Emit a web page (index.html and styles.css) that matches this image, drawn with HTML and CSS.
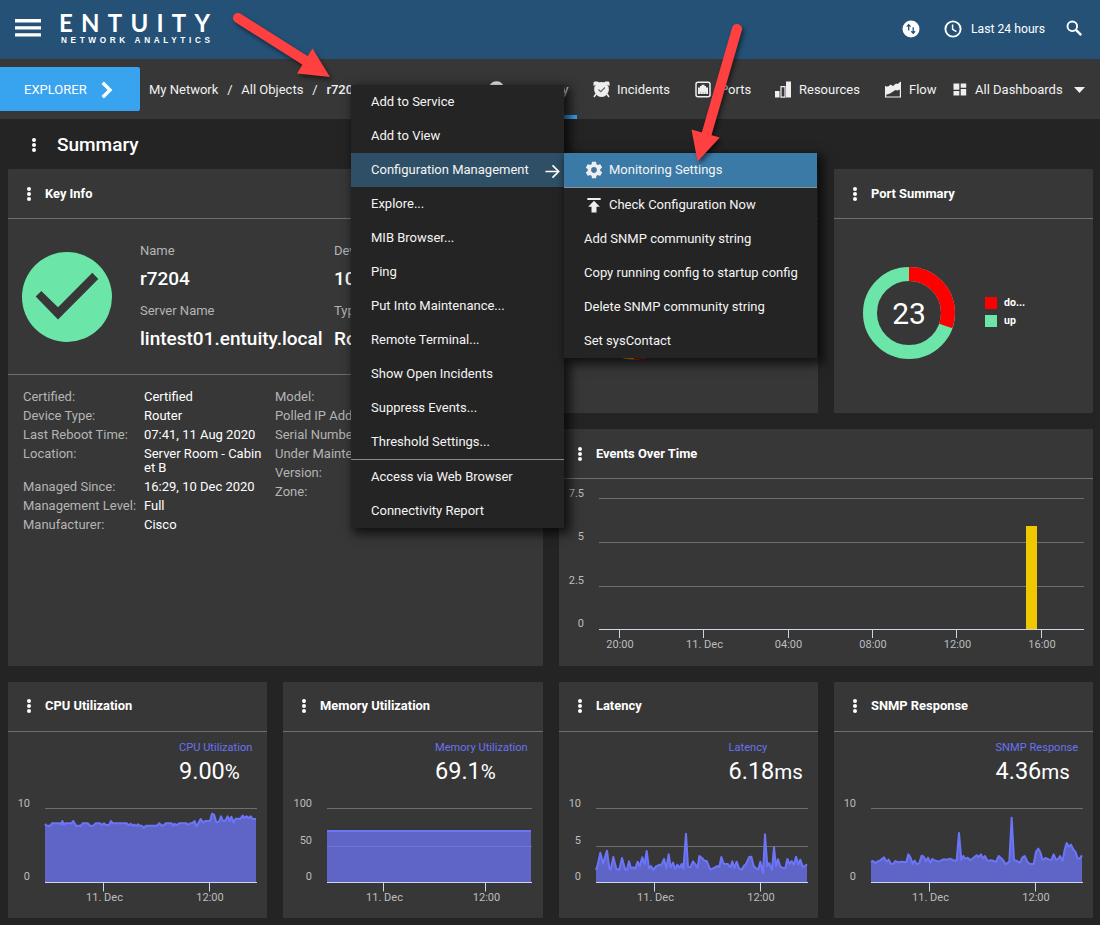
FILE: index.html
```html
<!DOCTYPE html>
<html lang="en">
<head>
<meta charset="utf-8">
<title>Entuity Network Analytics</title>
<link rel="stylesheet" href="styles.css">
</head>
<body>
<svg class="defs" width="0" height="0">
  <symbol id="dots" viewBox="0 0 6 16"><circle cx="3" cy="3" r="2"/><circle cx="3" cy="8" r="2"/><circle cx="3" cy="13" r="2"/></symbol>
</svg>

<header class="topbar">
  <svg class="burger" width="26" height="18" viewBox="0 0 26 18"><path d="M0 0h26v3.4H0zM0 7.2h26v3.4H0zM0 14.2h26v3.4H0z"/></svg>
  <svg class="logo" width="160" height="40" viewBox="0 0 160 40">
    <text class="logo-name" x="-1" y="22" textLength="151">ENTUITY</text>
    <text class="logo-sub" x="1" y="33" textLength="149">NETWORK ANALYTICS</text>
  </svg>
  <div class="top-tools">
    <svg class="sync" width="18" height="18" viewBox="0 0 18 18"><circle cx="9" cy="9" r="8.5" fill="#fff"/><path d="M6.7 10.5V4.8M4.8 6.6l1.9-2 1.9 2M11.2 7.2v6M9.3 11.2l1.9 2 1.9-2" fill="none" stroke="#255176" stroke-width="1.3"/></svg>
    <svg class="clock" width="18" height="18" viewBox="0 0 18 18" fill="none" stroke="#fff" stroke-width="1.9"><circle cx="9" cy="9" r="7.6"/><path d="M8.6 4.4v5l3.8 2.3" stroke-width="1.5"/></svg>
    <span class="range">Last 24 hours</span>
    <svg class="search" width="17" height="17" viewBox="0 0 17 17" fill="none" stroke="#fff"><circle cx="6.3" cy="6.3" r="4.8" stroke-width="1.9"/><path d="M9.900 9.900l5.300 5.300" stroke-width="2.500"/></svg>
  </div>
</header>

<nav class="navbar">
  <a class="explorer">EXPLORER
    <svg width="12" height="18" viewBox="0 0 12 18"><path d="M1.7 1.8L9 9l-7.3 7.2" fill="none" stroke="#fff" stroke-width="3.4"/></svg>
  </a>
  <div class="crumbs"><span>My Network</span><i>/</i><span>All Objects</span><i>/</i><b>r7204</b></div>
  <div class="tabs">
    <a class="tab tab-summary"><svg width="17" height="17" viewBox="0 0 17 17"><circle cx="8.5" cy="8.5" r="8.2" fill="#eee"/></svg>Summary</a>
    <a class="tab tab-incidents"><svg width="17" height="17" viewBox="0 0 17 17"><path d="M.5 5V1.500L1.500.500H4.500L7 2zM16.500 5V1.500L15.500.500H12.500L10 2z" fill="#eee"/><circle cx="8.500" cy="8.500" r="7.400" fill="#eee"/><path d="M3 13l-2 3M14 13l2 3" stroke="#eee" stroke-width="1.500"/><path d="M5.500 8.500l2.300 2.200 4-4.200" fill="none" stroke="#666" stroke-width="1.200"/></svg>Incidents</a>
    <a class="tab tab-ports"><svg width="16" height="17" viewBox="0 0 16 17"><rect x="1" y="1.200" width="14" height="14.500" rx="2" fill="none" stroke="#eee" stroke-width="1.500"/><path d="M3 13V6.500h2V5h1.500V3.800h3V5H11v1.500h2V13z" fill="#eee"/><path d="M5.500 13v-2M8 13v-2M10.500 13v-2" stroke="#999" stroke-width=".7"/></svg>Ports</a>
    <a class="tab tab-resources"><svg width="16" height="17" viewBox="0 0 16 17"><path d="M0 10h4.500v6.500H0zM11 .500h5v16h-5z" fill="#eee"/><path d="M6 5.700h4v10.500H6z" fill="#373737" stroke="#eee" stroke-width="1.200"/></svg>Resources</a>
    <a class="tab tab-flow"><svg width="16" height="17" viewBox="0 0 16 17"><path d="M.600 5v11h14.800V1" fill="none" stroke="#eee" stroke-width="1.200"/><path d="M.500 6L4 5l1.500-1.500L8 5l3-2.500 1.500.500L16 .500V8l-3.500 1.500L10.500 9 5 12.500.500 14z" fill="#eee"/></svg>Flow</a>
    <a class="tab tab-all"><svg width="14" height="13" viewBox="0 0 14 13"><path d="M.500.500h5.800v6.200H.500zM.500 8h5.800v4.500H.500zM7.700.500h5.500V4.700H7.700zM7.700 6h5.500v6.500H7.700z" fill="#eee"/></svg><span class="all-label">All Dashboards</span><svg width="11" height="6" viewBox="0 0 11 6"><path d="M0 0h11L5.500 6z" fill="#eee"/></svg></a>
  </div>
</nav>

<h1 class="page-title"><svg class="dots" width="6" height="16"><use href="#dots"/></svg>Summary</h1>

<main class="grid">
  <section class="card key-info">
    <h2><svg class="dots" width="6" height="16"><use href="#dots"/></svg>Key Info</h2>
    <div class="identity">
      <svg class="status" width="90" height="90" viewBox="0 0 90 90"><circle cx="45" cy="45" r="45" fill="#6be6a8"/><path d="M13.700 44.500l5.600-5.600L36 55.200 70.300 20.700l6 6.300L36 67.500z" fill="#373737"/></svg>
      <dl class="names">
        <div><dt>Name</dt><dd>r7204</dd><dt>Server Name</dt><dd>lintest01.entuity.local</dd></div>
        <div><dt>Device</dt><dd>10.4</dd><dt>Type</dt><dd>Rout</dd></div>
      </dl>
    </div>
    <div class="details">
      <dl>
        <dt>Certified:</dt><dd>Certified</dd>
        <dt>Device Type:</dt><dd>Router</dd>
        <dt>Last Reboot Time:</dt><dd>07:41, 11 Aug 2020</dd>
        <dt>Location:</dt><dd>Server Room - Cabinet B</dd>
        <dt>Managed Since:</dt><dd>16:29, 10 Dec 2020</dd>
        <dt>Management Level:</dt><dd>Full</dd>
        <dt>Manufacturer:</dt><dd>Cisco</dd>
      </dl>
      <dl>
        <dt>Model:</dt><dt>Polled IP Addr:</dt><dt>Serial Number:</dt><dt>Under Mainten:</dt><dt>Version:</dt><dt>Zone:</dt>
      </dl>
    </div>
  </section>

  <section class="card">
    <h2></h2>
    <svg class="chart" width="259" height="194" viewBox="0 0 259 194">
      <g fill="none" stroke-width="14"><circle cx="75" cy="94.500" r="39" stroke="#f0c800"/><path d="M75 55.500a39 39 0 0 1 0 78" stroke="#f00"/></g>
    </svg>
  </section>

  <section class="card">
    <h2><svg class="dots" width="6" height="16"><use href="#dots"/></svg>Port Summary</h2>
    <div class="donut-row">
      <svg width="92" height="92" viewBox="0 0 92 92">
        <g fill="none" stroke-width="14" transform="rotate(-90 46 46)"><circle cx="46" cy="46" r="39" stroke="#6be6a8"/><circle cx="46" cy="46" r="39" stroke="#f00" pathLength="23" stroke-dasharray="7 16"/></g>
        <text class="donut-total" x="46" y="57" text-anchor="middle">23</text>
      </svg>
      <ul class="legend"><li class="down">do...</li><li class="up">up</li></ul>
    </div>
  </section>

  <section class="card events">
    <h2><svg class="dots" width="6" height="16"><use href="#dots"/></svg>Events Over Time</h2>
    <svg class="chart" width="534" height="187" viewBox="0 0 534 187">
      <path class="gridline" d="M40 19.500H525M40 63.500H525M40 107.500H525"/>
      <rect x="467" y="47" width="11" height="103" fill="#f0c800"/>
      <path class="axis" d="M40 150.500H525M60.500 151v8M144.500 151v8M229.500 151v8M313.500 151v8M397.500 151v8M482.500 151v8"/>
      <g text-anchor="end"><text x="25" y="18">7.5</text><text x="25" y="61">5</text><text x="25" y="105">2.5</text><text x="25" y="148">0</text></g>
      <g text-anchor="middle"><text x="61" y="169">20:00</text><text x="145.500" y="169">11. Dec</text><text x="229.500" y="169">04:00</text><text x="314" y="169">08:00</text><text x="398.500" y="169">12:00</text><text x="483" y="169">16:00</text></g>
    </svg>
  </section>

  <section class="card trend">
    <h2><svg class="dots" width="6" height="16"><use href="#dots"/></svg>CPU Utilization</h2>
    <svg class="chart" width="259" height="186" viewBox="0 0 259 186">
      <text class="metric" x="171" y="19">CPU Utilization</text>
      <text class="value" x="171" y="47">9.00<tspan>%</tspan></text>
      <path class="gridline" d="M37 76.500H249"/>
      <g transform="translate(-8 -57) scale(.33333)">
        <path class="area" d="M135 622V447L139 452 151 452 156 445 181 445 183 449 187 438 192 449 196 445 214 445 220 438 228 452 242 452 248 445 264 445 270 452 280 452 287 445 300 445 306 450 312 445 318 450 327 450 333 438 338 445 380 445 386 451 392 446 398 452 403 449 409 453 414 448 420 452 425 452 432 459 438 452 470 452 478 445 485 452 492 450 497 445 515 445 519 452 524 446 530 451 537 445 560 445 565 450 571 445 577 445 584 438 589 454 595 445 602 432 609 442 617 438 630 438 636 416 642 419 649 442 657 440 663 424 669 438 675 438 683 424 689 438 694 425 701 443 707 431 722 431 728 422 734 429 740 424 746 430 752 424 757 431 768 432V622z"/>
        <path class="line" d="M135 447L139 452 151 452 156 445 181 445 183 449 187 438 192 449 196 445 214 445 220 438 228 452 242 452 248 445 264 445 270 452 280 452 287 445 300 445 306 450 312 445 318 450 327 450 333 438 338 445 380 445 386 451 392 446 398 452 403 449 409 453 414 448 420 452 425 452 432 459 438 452 470 452 478 445 485 452 492 450 497 445 515 445 519 452 524 446 530 451 537 445 560 445 565 450 571 445 577 445 584 438 589 454 595 445 602 432 609 442 617 438 630 438 636 416 642 419 649 442 657 440 663 424 669 438 675 438 683 424 689 438 694 425 701 443 707 431 722 431 728 422 734 429 740 424 746 430 752 424 757 431 768 432"/>
      </g>
      <path class="axis" d="M37 150.500H249M95.500 151v8.500M201.500 151v8.500"/>
      <g text-anchor="end"><text x="22" y="75">10</text><text x="22" y="148">0</text></g>
      <g text-anchor="middle"><text x="96.500" y="169">11. Dec</text><text x="202" y="169">12:00</text></g>
    </svg>
  </section>

  <section class="card trend">
    <h2><svg class="dots" width="6" height="16"><use href="#dots"/></svg>Memory Utilization</h2>
    <svg class="chart" width="260" height="186" viewBox="0 0 260 186">
      <text class="metric" x="152" y="19">Memory Utilization</text>
      <text class="value" x="152" y="47">69.1<tspan>%</tspan></text>
      <path class="gridline" d="M44 76.500H249M44 114.500H249"/>
      <path class="area" d="M44 150V99H248V150z"/>
      <path class="line-flat" d="M44 99H248"/>
      <path class="axis" d="M44 150.500H249M100.500 151v8.500M202.500 151v8.500"/>
      <g text-anchor="end"><text x="29" y="75">100</text><text x="29" y="112">50</text><text x="29" y="148">0</text></g>
      <g text-anchor="middle"><text x="101.500" y="169">11. Dec</text><text x="203.500" y="169">12:00</text></g>
    </svg>
  </section>

  <section class="card trend">
    <h2><svg class="dots" width="6" height="16"><use href="#dots"/></svg>Latency</h2>
    <svg class="chart" width="259" height="186" viewBox="0 0 259 186">
      <text class="metric" x="169.500" y="19">Latency</text>
      <text class="value" x="169.500" y="47">6.18<tspan>ms</tspan></text>
      <path class="gridline" d="M37 76.500H249M37 114.500H249"/>
      <g transform="translate(-9 -57) scale(.33333)">
        <path class="area" d="M138 622V585L143 570 151 533 159 566 171 527 178 580 182 584 190 546 199 582 208 584 216 549 226 585 231 584 237 559 243 580 250 577 256 581 263 560 269 574 277 547 284 567 290 528 297 580 303 573 310 585 317 575 329 569 335 569 342 552 349 580 356 538 362 577 369 563 375 582 382 569 389 579 395 567 400 582 408 476 414 575 421 577 429 559 436 568 443 578 448 543 456 549 463 557 470 558 481 584 489 580 503 573 508 576 514 546 521 566 533 567 541 577 547 559 553 579 560 560 567 580 575 584 581 574 588 567 597 547 604 545 611 573 618 580 625 583 631 560 639 595 645 478 652 573 658 564 666 585 672 517 678 574 684 553 691 575 702 580 706 580 712 552 719 567 725 558 732 569 738 545 745 568 751 554 758 575 764 574 771 568V622z"/>
        <path class="line" d="M138 585L143 570 151 533 159 566 171 527 178 580 182 584 190 546 199 582 208 584 216 549 226 585 231 584 237 559 243 580 250 577 256 581 263 560 269 574 277 547 284 567 290 528 297 580 303 573 310 585 317 575 329 569 335 569 342 552 349 580 356 538 362 577 369 563 375 582 382 569 389 579 395 567 400 582 408 476 414 575 421 577 429 559 436 568 443 578 448 543 456 549 463 557 470 558 481 584 489 580 503 573 508 576 514 546 521 566 533 567 541 577 547 559 553 579 560 560 567 580 575 584 581 574 588 567 597 547 604 545 611 573 618 580 625 583 631 560 639 595 645 478 652 573 658 564 666 585 672 517 678 574 684 553 691 575 702 580 706 580 712 552 719 567 725 558 732 569 738 545 745 568 751 554 758 575 764 574 771 568"/>
      </g>
      <path class="axis" d="M37 150.500H249M95.500 151v8.500M201.500 151v8.500"/>
      <g text-anchor="end"><text x="22" y="75">10</text><text x="22" y="112">5</text><text x="22" y="148">0</text></g>
      <g text-anchor="middle"><text x="96.500" y="169">11. Dec</text><text x="202" y="169">12:00</text></g>
    </svg>
  </section>

  <section class="card trend">
    <h2><svg class="dots" width="6" height="16"><use href="#dots"/></svg>SNMP Response</h2>
    <svg class="chart" width="259" height="186" viewBox="0 0 259 186">
      <text class="metric" x="161.500" y="19">SNMP Response</text>
      <text class="value" x="161.500" y="47">4.36<tspan>ms</tspan></text>
      <path class="gridline" d="M37 76.500H249"/>
      <g transform="translate(-14 -57) scale(.33333)">
        <path class="area" d="M153 622V561L159 558 166 564 173 559 181 556 192 547 200 560 206 554 213 567 220 566 226 558 234 562 245 560 259 562 265 538 271 547 278 566 284 557 291 568 298 564 305 542 311 545 318 558 324 548 331 563 337 552 344 556 357 560 370 553 382 554 390 551 403 557 410 556 417 474 424 555 430 543 436 552 443 548 451 556 460 549 470 541 476 546 483 538 489 550 495 543 502 557 516 556 528 561 536 543 548 554 557 568 568 560 575 428 582 555 590 558 600 563 607 548 614 543 622 560 630 567 641 567 648 530 655 521 661 532 668 555 676 549 688 554 694 555 701 538 708 554 714 553 720 543 728 557 734 525 740 504 747 515 753 509 760 523 766 530 773 550 779 551 786 541V622z"/>
        <path class="line" d="M153 561L159 558 166 564 173 559 181 556 192 547 200 560 206 554 213 567 220 566 226 558 234 562 245 560 259 562 265 538 271 547 278 566 284 557 291 568 298 564 305 542 311 545 318 558 324 548 331 563 337 552 344 556 357 560 370 553 382 554 390 551 403 557 410 556 417 474 424 555 430 543 436 552 443 548 451 556 460 549 470 541 476 546 483 538 489 550 495 543 502 557 516 556 528 561 536 543 548 554 557 568 568 560 575 428 582 555 590 558 600 563 607 548 614 543 622 560 630 567 641 567 648 530 655 521 661 532 668 555 676 549 688 554 694 555 701 538 708 554 714 553 720 543 728 557 734 525 740 504 747 515 753 509 760 523 766 530 773 550 779 551 786 541"/>
      </g>
      <path class="axis" d="M37 150.500H249M95.500 151v8.500M201.500 151v8.500"/>
      <g text-anchor="end"><text x="22" y="75">10</text><text x="22" y="148">0</text></g>
      <g text-anchor="middle"><text x="96.500" y="169">11. Dec</text><text x="202" y="169">12:00</text></g>
    </svg>
  </section>
</main>

<ul class="menu context-menu">
  <li>Add to Service</li>
  <li>Add to View</li>
  <li class="open">Configuration Management<svg width="15" height="15" viewBox="0 0 15 15"><path d="M.500 7.500h13M7.500 1.300l6.200 6.200-6.200 6.200" fill="none" stroke="#fff" stroke-width="1.700"/></svg></li>
  <li>Explore...</li>
  <li>MIB Browser...</li>
  <li>Ping</li>
  <li>Put Into Maintenance...</li>
  <li>Remote Terminal...</li>
  <li>Show Open Incidents</li>
  <li>Suppress Events...</li>
  <li>Threshold Settings...</li>
  <li class="divided">Access via Web Browser</li>
  <li>Connectivity Report</li>
</ul>

<ul class="menu submenu">
  <li class="active"><svg width="20" height="20" viewBox="0 0 24 24"><path fill="#eee" d="M19.430 12.980c.040-.320.070-.640.070-.980s-.030-.660-.070-.980l2.110-1.650c.190-.150.240-.420.120-.640l-2-3.460c-.120-.220-.390-.300-.610-.220l-2.490 1c-.520-.400-1.080-.730-1.690-.980l-.380-2.650C14.460 2.180 14.250 2 14 2h-4c-.250 0-.460.180-.490.420l-.380 2.650c-.610.250-1.170.590-1.690.980l-2.490-1c-.230-.090-.490 0-.610.220l-2 3.460c-.130.220-.070.490.120.640l2.110 1.650c-.040.320-.070.650-.070.980s.030.660.070.980l-2.110 1.650c-.190.150-.240.420-.120.640l2 3.460c.120.220.390.300.610.220l2.490-1c.520.400 1.080.730 1.690.980l.380 2.650c.030.240.240.420.490.420h4c.250 0 .460-.180.490-.420l.380-2.650c.610-.250 1.170-.590 1.690-.980l2.490 1c.230.090.490 0 .610-.220l2-3.460c.120-.220.070-.490-.120-.640l-2.110-1.650zM12 15.500c-1.930 0-3.500-1.570-3.500-3.500s1.570-3.500 3.500-3.500 3.500 1.570 3.500 3.500-1.570 3.500-3.500 3.500z"/></svg>Monitoring Settings</li>
  <li><svg width="20" height="20" viewBox="0 0 24 24"><path fill="#eee" d="M4 3.500v2.500h16V3.500H4zm1 10.500h4v7h6v-7h4l-7-7-7 7z"/></svg>Check Configuration Now</li>
  <li>Add SNMP community string</li>
  <li>Copy running config to startup config</li>
  <li>Delete SNMP community string</li>
  <li>Set sysContact</li>
</ul>

<svg class="annotations" width="1100" height="200" viewBox="0 0 1100 200">
  <g fill="#ff4040" stroke="#ff4040">
    <path d="M238 18L306 61" stroke-width="10" stroke-linecap="round"/><path d="M312.500 48.500L330 77 297 73.500z" stroke="none"/>
    <path d="M737 29L706 136" stroke-width="10" stroke-linecap="round"/><path d="M691.500 129.500L719.800 137.500 697.500 161.500z" stroke="none"/>
  </g>
</svg>
</body>
</html>
```
FILE: styles.css
```css
* { box-sizing: border-box; }
body { margin: 0; width: 1100px; height: 925px; overflow: hidden; position: relative; background: #242424; color: #fff; font: 400 13px/16px Roboto, "Liberation Sans", sans-serif; }
svg { display: block; flex: none; }
.defs { position: absolute; }
ul, dl, dd { margin: 0; padding: 0; list-style: none; }
.dots { fill: #fff; }

.topbar { height: 59px; display: flex; align-items: flex-start; padding-left: 15px; background: #255176; }
.burger { margin-top: 19px; fill: #fff; }
.logo { margin: 10px 0 0 19px; fill: #fff; overflow: visible; }
.logo-name { font: 700 24px Lato, sans-serif; }
.logo-sub { font: 700 8.2px "Liberation Sans", sans-serif; }
.top-tools { display: flex; align-items: center; height: 58px; margin-left: auto; width: 198px; }
.clock { margin: 0 9px 0 24px; }
.range { width: 95px; font-size: 12.2px; white-space: nowrap; }
.search { margin-top: -1px; }

.navbar { height: 60px; display: flex; align-items: center; background: #373737; color: #f2f2f2; }
.explorer { display: flex; align-items: center; width: 140px; height: 44px; padding: 1px 0 0 24px; gap: 14px; background: #38a3ef; border-radius: 0 2px 2px 0; color: #fff; }
.crumbs { display: flex; width: 348px; padding: 1px 0 0 9px; white-space: nowrap; }
.crumbs i { width: 23px; text-align: center; font-style: normal; }
.crumbs b { font-weight: 500; }
.tabs { display: flex; }
.tab { position: relative; display: flex; align-items: center; gap: 8px; height: 60px; padding-top: 1px; white-space: nowrap; }
.tab-summary { width: 105px; }
.tab-summary::after { content: ""; position: absolute; left: -9px; bottom: 0; width: 98px; height: 4px; background: #38a3ef; }
.tab-incidents { width: 102px; gap: 7px; }
.tab-ports { width: 80px; gap: 9px; }
.tab-resources { width: 110px; }
.tab-flow { width: 68px; }
.all-label { width: 91px; }

.page-title { display: flex; align-items: center; gap: 20px; height: 50px; margin: 0; padding: 2px 0 0 31px; font-size: 19px; font-weight: 500; }

.grid { display: grid; grid-template-columns: 259px 260px 259px 259px; grid-template-rows: 244px 237px 236px; gap: 16px; padding-left: 8px; }
.card { background: #373737; border-radius: 1px; overflow: hidden; }
.card h2 { display: flex; align-items: center; gap: 13px; height: 50px; margin: 0; padding-left: 18px; border-bottom: 1px solid #6f6f6f; font-size: 12.9px; font-weight: 700; }
.trend h2 { padding-bottom: 2px; }
.key-info { grid-column: span 2; grid-row: span 2; }
.events { grid-column: span 2; }

.identity { display: flex; height: 156px; padding: 33px 0 0 14px; border-bottom: 1px solid #6f6f6f; }
.names { display: grid; grid-template-columns: 194px 200px; margin: -10px 0 0 28px; }
.names dt { height: 18px; line-height: 18px; color: #b4b4b4; }
.names dd { height: 42px; line-height: 38px; font-size: 19px; font-weight: 500; white-space: nowrap; }
.details { display: flex; gap: 12px; padding: 15px 0 0 15px; line-height: 14px; }
.details dl { display: grid; grid-template-columns: 121px 119px; row-gap: 5px; align-content: start; }
.details dl + dl { grid-template-columns: 120px; }
.details dt { color: #b4b4b4; white-space: nowrap; }
.details dd { word-break: break-all; }

.chart text { font-size: 11px; fill: #bdbdbd; }
.chart .metric { font-size: 11.1px; fill: #6a72f2; }
.chart .value { font-size: 23.500px; fill: #fff; }
.chart .value tspan { font-size: 20.500px; }
.gridline { stroke: #6f6f6f; fill: none; }
.axis { stroke: #ccd6eb; fill: none; }
.area { fill: #6c75f8; fill-opacity: .75; }
.line { fill: none; stroke: #6c75f8; stroke-width: 6; stroke-linejoin: round; }
.line-flat { stroke: #6c75f8; stroke-width: 2; }

.donut-row { display: flex; gap: 30px; padding: 48px 0 0 29px; }
.donut-total { font-size: 30px; fill: #fff; }
.legend { padding-top: 27px; font-size: 10.6px; line-height: 18px; font-weight: 700; }
.legend li { display: flex; align-items: center; gap: 7px; }
.legend li::before { content: ""; width: 12px; height: 12px; background: #6be6a8; }
.legend .down::before { background: #f00; }

.menu { position: absolute; background: #242424; color: #f4f4f4; box-shadow: 4px 4px 10px 2px rgba(0, 0, 0, .7); }
.menu li { display: flex; align-items: center; height: 34px; padding: 0 20px; white-space: nowrap; }
.context-menu { left: 351px; top: 85px; width: 213px; }
.context-menu .open { justify-content: space-between; padding-right: 4px; background: #2f4f66; }
.context-menu .open svg { margin-top: 3px; }
.context-menu .divided { height: 35px; border-top: 1px solid #8a8a8a; }
.submenu { left: 564px; top: 153px; width: 253px; }
.submenu .active { height: 35px; background: #3b7aa7; border-bottom: 1px solid #8a9096; }
.submenu svg { margin-right: 5px; }

.annotations { position: absolute; left: 0; top: 0; pointer-events: none; filter: drop-shadow(2px 3px 2px rgba(0, 0, 0, .5)); }
```
